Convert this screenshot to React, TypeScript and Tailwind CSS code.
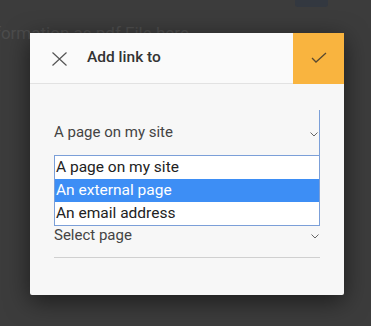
function Chevron() {
  return (
    <svg width="8" height="5" viewBox="0 0 8 5" className="text-[#666]">
      <path d="M0.5 0.5 L4 4 L7.5 0.5" fill="none" stroke="currentColor" strokeWidth="1" />
    </svg>
  );
}

function App() {
  return (
    <div
      className="relative h-[326px] w-[371px] overflow-hidden bg-[#3c3c3c]"
      style={{ fontFamily: "Roboto, 'Liberation Sans', sans-serif" }}
    >
      {/* page behind the overlay */}
      <div className="flex h-[8px] items-start justify-end pr-[43px]">
        <div className="h-[7px] w-[33px] rounded-b-[3px] bg-[#333840]" />
      </div>
      <div className="mt-[14px] -ml-[5px] text-[17px] leading-[22px] whitespace-nowrap text-[#4c4c4c]">
        formation as pdf File here
      </div>

      {/* dialog */}
      <div className="absolute left-[30px] top-[33px] flex h-[262px] w-[314px] flex-col rounded-[2px] bg-[#f7f7f7] shadow-[0_6px_24px_rgba(0,0,0,0.55)]">
        <div className="flex h-[51px] items-center border-b border-[#e2e2e2] bg-[#fafafa]">
          <button className="flex w-[57px] items-center justify-center pl-[2px] pt-[1px]">
            <svg width="15" height="14" viewBox="0 0 15 14" className="text-[#555]">
              <path d="M0.5 0.5 L14.5 13.5 M14.5 0.5 L0.5 13.5" stroke="currentColor" strokeWidth="1.2" />
            </svg>
          </button>
          <div className="flex-1 text-[15.5px] font-medium text-[#333]">Add link to</div>
          <button className="flex h-[51px] w-[51px] items-center justify-center bg-[#f9b43f]">
            <svg width="16" height="12" viewBox="0 0 16 12" className="text-[#5a4a30]">
              <path d="M1 6 L5 10 L15 1" fill="none" stroke="currentColor" strokeWidth="1.3" />
            </svg>
          </button>
        </div>

        <div className="flex flex-col px-[24px] pt-[26px]">
          <div className="relative">
            <div className="flex h-[45px] items-center justify-between border-r border-[#7b9fd8] text-[15px] text-[#444]">
              <span>A page on my site</span>
              <span className="mt-[3px] mr-[1px]">
                <Chevron />
              </span>
            </div>
            <div className="absolute left-0 right-0 top-[45px] z-10 border border-[#7b9fd8] bg-white text-[15.5px] leading-[23px] text-[#222]">
              <div className="px-[1px]">A page on my site</div>
              <div className="bg-[#3d8ef5] px-[1px] text-white">An external page</div>
              <div className="px-[1px]">An email address</div>
            </div>
          </div>

          <div className="mt-[58px] flex h-[45px] items-center justify-between border-b border-[#d0d0d0] text-[15px] text-[#444]">
            <span>Select page</span>
            <span className="mt-[3px] mr-[1px]">
              <Chevron />
            </span>
          </div>
        </div>
      </div>
    </div>
  );
}

export default App;
